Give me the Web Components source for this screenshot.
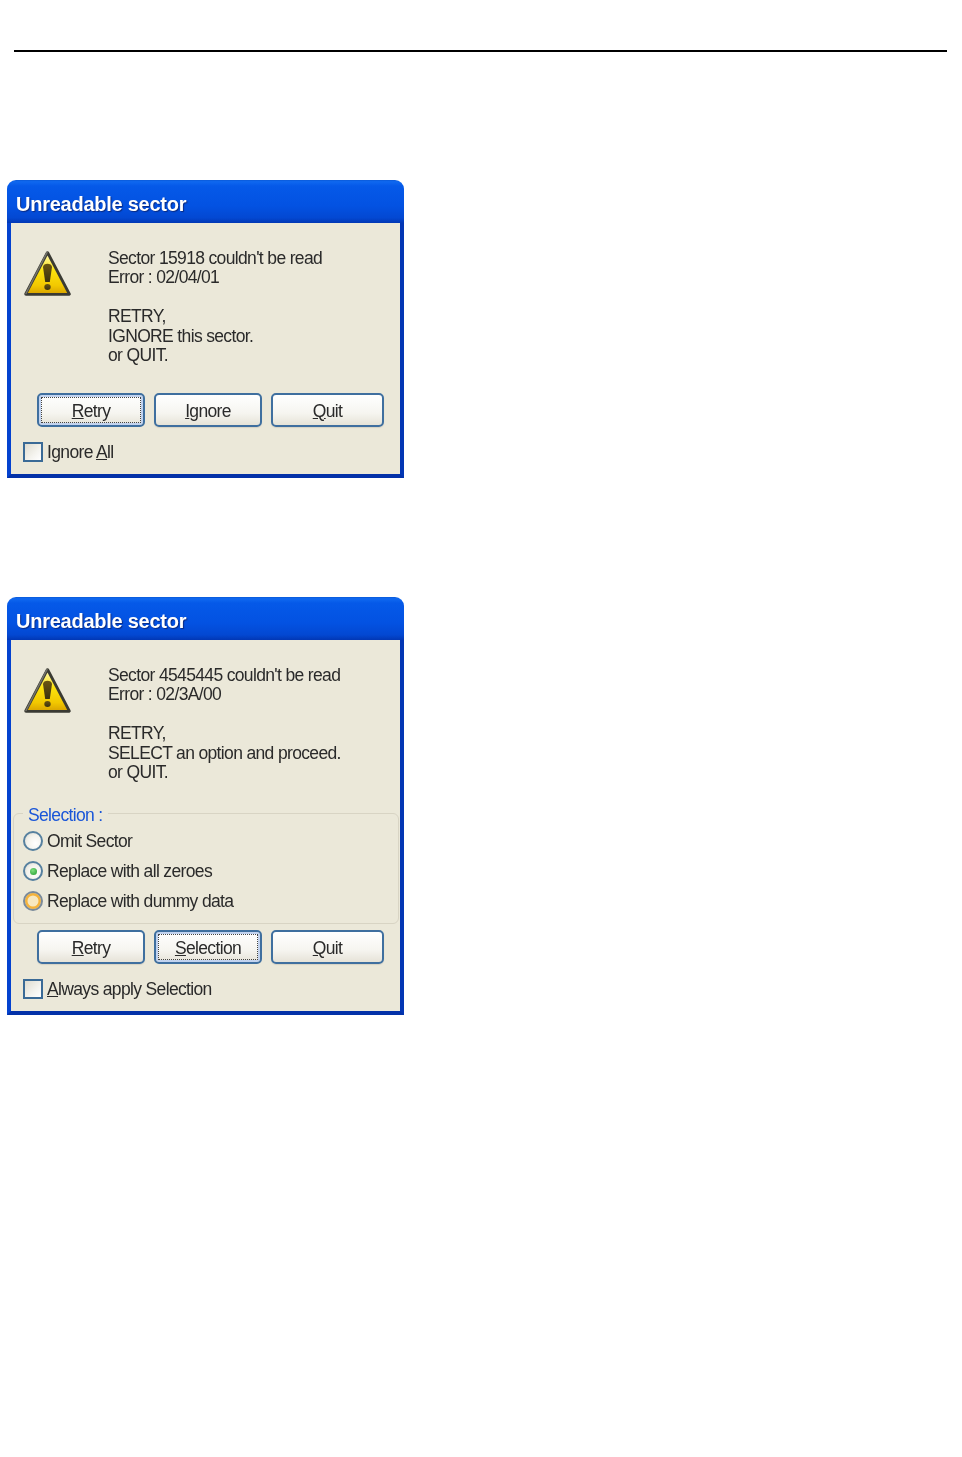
<!DOCTYPE html>
<html><head><meta charset="utf-8"><style>
html,body{margin:0;background:#fff}
body{width:962px;height:1457px;overflow:hidden;font-family:"Liberation Sans",sans-serif}
xp-dialog.first{margin-top:128px}
xp-dialog.second{margin-top:119px}
</style></head><body>
<page-rule></page-rule>
<xp-dialog class="first" heading="Unreadable sector">
  <xp-message><span>Sector 15918 couldn't be read</span><span>Error : 02/04/01</span><span>&nbsp;</span><span>RETRY,</span><span>IGNORE this sector.</span><span>or QUIT.</span></xp-message>
  <xp-buttons style="margin-top:28px">
    <xp-button focus w="108"><u>R</u>etry</xp-button>
    <xp-button w="108"><u>I</u>gnore</xp-button>
    <xp-button w="113"><u>Q</u>uit</xp-button>
  </xp-buttons>
  <xp-check>Ignore <u>A</u>ll</xp-check>
</xp-dialog>
<xp-dialog class="second" heading="Unreadable sector">
  <xp-message><span>Sector 4545445 couldn't be read</span><span>Error : 02/3A/00</span><span>&nbsp;</span><span>RETRY,</span><span>SELECT an option and proceed.</span><span>or QUIT.</span></xp-message>
  <xp-group legend="Selection :">
    <xp-radio>Omit Sector</xp-radio>
    <xp-radio checked>Replace with all zeroes</xp-radio>
    <xp-radio hover>Replace with dummy data</xp-radio>
  </xp-group>
  <xp-buttons style="margin-top:6px">
    <xp-button w="108"><u>R</u>etry</xp-button>
    <xp-button focus w="108"><u>S</u>election</xp-button>
    <xp-button w="113"><u>Q</u>uit</xp-button>
  </xp-buttons>
  <xp-check><u>A</u>lways apply Selection</xp-check>
</xp-dialog>
<script>
const TXT='font-size:17.5px;letter-spacing:-.65px;color:#2a2a2a;';
function def(name, css, html, init){
  customElements.define(name, class extends HTMLElement{
    constructor(){super();const r=this.attachShadow({mode:"open"});
      r.innerHTML="<style>"+css+"</style>"+(typeof html==="function"?html(this):html);}
    connectedCallback(){ if(init) init(this); }
  });
}
def("page-rule",":host{display:block;height:2px;background:#000;margin:50px 15px 0 14px}","");
def("xp-dialog",`
:host{display:block;width:397px;margin-left:7px;font-family:"Liberation Sans",sans-serif;color:#2a2a2a;filter:blur(.45px)}
.title{height:43px;box-sizing:border-box;border-radius:9px 9px 0 0;padding:12px 0 0 9px;
 background:linear-gradient(180deg,#0a5ad8 0,#0f68f0 4%,#0559e8 14%,#0352e2 60%,#0348d2 88%,#0237b4 100%);
 color:#fff;font:bold 20px/24px "Liberation Sans",sans-serif;letter-spacing:-.25px;text-shadow:1px 1px 1px #0b2a80}
.client{box-sizing:border-box;border:solid #0442cf;border-width:0 4px 4px;border-bottom-color:#0331a8;border-right-color:#0336b4;background:#ebe8d9;padding:0 0 12px}
`,e=>`<div class="title">${e.getAttribute("heading")}</div><div class="client"><slot></slot></div>`);
def("xp-message",`
:host{display:flex;gap:36px;padding:27px 0 0 12px;align-items:flex-start}
svg{flex:none;width:49px;height:47px}
.t{display:flex;flex-direction:column;${TXT}line-height:19.45px;margin-top:-1px;margin-bottom:-1px}
::slotted(span){display:block;white-space:nowrap}
`,`<svg viewBox="0 0 49 47"><defs><linearGradient id="y" x1="0" y1="0" x2="0" y2="1"><stop offset="0" stop-color="#fff6a0"/><stop offset=".4" stop-color="#fce30e"/><stop offset=".8" stop-color="#f2c800"/><stop offset="1" stop-color="#dca800"/></linearGradient><linearGradient id="m" x1="0" y1="0" x2="0" y2="1"><stop offset="0" stop-color="#6b5510"/><stop offset="1" stop-color="#3a3210"/></linearGradient></defs>
<path d="M24.500 3 46 44H3z" fill="#3a3a33" stroke="#3a3a33" stroke-width="3.500" stroke-linejoin="round"/>
<path d="M24 2.500 3 43.500" fill="none" stroke="#74746c" stroke-width="1.500" stroke-linecap="round"/>
<path d="M24.500 5.500 44.200 43H4.800z" fill="url(#y)"/>
<path d="M20 17c0-4.500 9-4.500 9 0l-2.200 15h-4.600z" fill="url(#m)"/><ellipse cx="24.500" cy="37" rx="3.200" ry="3" fill="url(#m)"/></svg><div class="t"><slot></slot></div>`);
def("xp-buttons",":host{display:flex;gap:9px;padding-left:26px}","<slot></slot>");
def("xp-button",`
:host{display:block;box-sizing:border-box;height:34px;border:2px solid #3f6f9f;border-radius:5px;position:relative;
 background:linear-gradient(180deg,#fff 0,#f6f5f0 60%,#e6e3d8 100%);text-align:center;${TXT}line-height:33px;box-shadow:0 1px 1px #d6d2c4}
:host([focus]){box-shadow:inset 0 0 0 2px #c2d3ef}
:host([focus])::after{content:"";position:absolute;inset:2px;border:1px dotted #444}
`,"<slot></slot>",e=>{e.style.width=e.getAttribute("w")+"px"});
def("xp-check",`
:host{display:flex;align-items:center;gap:4px;margin:15px 0 0 12px;height:20px;${TXT}line-height:20px;white-space:nowrap}
i{flex:none;box-sizing:border-box;width:20px;height:20px;border:2px solid #3a6a96;background:linear-gradient(135deg,#dfdcd0,#f4f3ee 60%,#fff)}
`,"<i></i><span><slot></slot></span>");
def("xp-group",`
:host{display:block;box-sizing:border-box;position:relative;margin:32px 0 0 2px;width:386px;height:111px;border:1px solid #d8d4c4;border-radius:6px;padding:17px 0 0 9px}
.l{position:absolute;left:9px;top:-9px;background:#ebe8d9;padding:0 5px;${TXT}line-height:20px;color:#1a56d8}
.r{display:flex;flex-direction:column;gap:10px}
`,e=>`<div class="l">${e.getAttribute("legend")}</div><div class="r"><slot></slot></div>`);
def("xp-radio",`
:host{display:flex;align-items:center;gap:4px;height:20px;${TXT}line-height:20px;white-space:nowrap}
i{flex:none;box-sizing:border-box;width:20px;height:20px;border-radius:50%;border:2px solid #56809f;background:radial-gradient(circle at 65% 65%,#fff 0,#f3f2ec 55%,#d8d6cc 100%);display:flex;align-items:center;justify-content:center}
:host([hover]) i{border-color:#7a8a9a;box-shadow:inset 0 0 0 2.500px #f5b33c;background:#f8e8c0}
b{width:7px;height:7px;border-radius:50%;background:radial-gradient(circle at 40% 35%,#7fe07f,#1f9a2f)}
`,e=>`<i>${e.hasAttribute("checked")?"<b></b>":""}</i><span><slot></slot></span>`);
</script>
</body></html>
